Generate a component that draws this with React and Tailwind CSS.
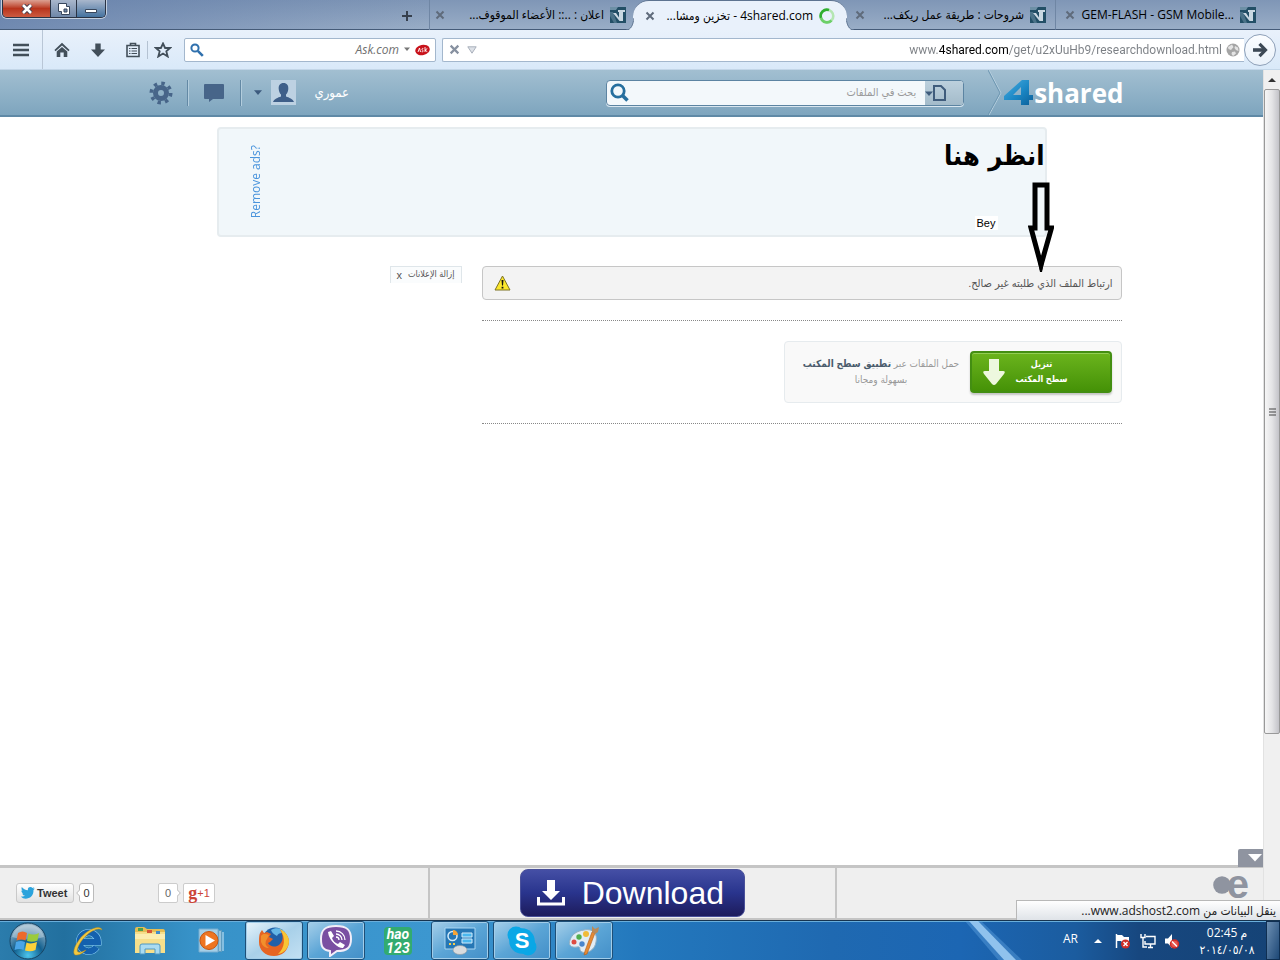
import React from "react";
import clsx from "clsx";

const tabs = [
  { id: "members", title: "اعلان : ..:: الأعضاء الموقوف...", dir: "rtl", width: "w-[203px]" },
  { id: "4shared", title: "4shared.com - تخزين ومشا...", dir: "rtl", width: "w-[214px]", active: true },
  { id: "guides", title: "شروحات : طريقة عمل ريكف...", dir: "rtl", width: "w-[208px]" },
  { id: "gem", title: "GEM-FLASH - GSM Mobile...", dir: "ltr", width: "w-[208px]" },
];

function CrossIcon({ className }) {
  return (
    <svg viewBox="0 0 10 10" className={className} aria-hidden="true">
      <path d="M1.5 1.5 8.5 8.5M8.5 1.5 1.5 8.5" stroke="currentColor" strokeWidth="2" fill="none" />
    </svg>
  );
}

function ForumIcon() {
  return (
    <svg viewBox="0 0 16 16" className="size-4 shrink-0" aria-hidden="true">
      <path d="M0 0H16V16H0Z" fill="#234f66" />
      <path d="M0 0H8L6 3H0Z" fill="#6d90a6" />
      <path d="M0 5H3L7 16H4L0 9Z" fill="#4b7288" />
      <path d="M3 6H6L9 10.500V5H8V3H15V5H13V14H9.500Z" fill="#c9d8e2" />
    </svg>
  );
}

function SpinnerIcon() {
  return (
    <svg viewBox="0 0 16 16" className="size-4 shrink-0" aria-hidden="true">
      <circle cx="8" cy="8" r="6.300" fill="none" stroke="#b4e6b2" strokeWidth="2.600" />
      <path d="M10 2A6.300 6.300 0 0 0 2 10" fill="none" stroke="#2fae2f" strokeWidth="2.600" />
      <path d="M2 10A6.300 6.300 0 0 0 12.500 12.500" fill="none" stroke="#6ccf68" strokeWidth="2.600" />
    </svg>
  );
}

function Tab({ tab }) {
  return (
    <div
      className={clsx(
        "relative flex h-[30px] min-w-0 items-center text-xs text-black",
        tab.width,
        tab.active
          ? "rounded-t-2xl border-t border-[#5d7390] bg-[#e9f1fb] pr-3 pl-3"
          : "border-b border-[#455b78] pr-[7px] pl-[5px]",
        tab.id === "guides" && "pl-[8px]! pr-[9px]!",
        tab.id === "gem" && "border-l border-l-[#6f86a4] pl-[9px]!"
      )}
    >
      {tab.active && (
        <>
          <svg viewBox="0 0 8 12" className="absolute bottom-0 -left-[7px] h-3 w-2" aria-hidden="true">
            <path d="M8 0C7 7 5 12 0 12H8Z" fill="#e9f1fb" />
            <path d="M8 0C7 7 5 12 0 12" fill="none" stroke="#5d7390" />
          </svg>
          <svg viewBox="0 0 8 12" className="absolute -right-[7px] bottom-0 z-10 h-3 w-2" aria-hidden="true">
            <path d="M0 0C1 7 3 12 8 12H0Z" fill="#e9f1fb" />
            <path d="M0 0C1 7 3 12 8 12" fill="none" stroke="#5d7390" />
          </svg>
        </>
      )}
      <button type="button" aria-label="Close tab" className="shrink-0 text-[#5f6b7b]">
        <CrossIcon className="size-[10px]" />
      </button>
      <span dir={tab.dir} className="mx-[6px] min-w-0 flex-1 text-right whitespace-nowrap">
        {tab.title}
      </span>
      {tab.active ? <SpinnerIcon /> : <ForumIcon />}
    </div>
  );
}

function TabStrip() {
  return (
    <div className="flex h-[30px] items-start overflow-hidden bg-linear-to-b from-[#7f96b6] to-[#9aaec7]">
      <div className="flex min-w-0 flex-1 items-start justify-between self-stretch border-b border-[#455b78] bg-linear-to-r from-[#5f7ba8]/70 to-transparent pl-[2px]">
        <div className="flex h-[18px] rounded-b-[5px] border border-t-0 border-[#2a3344] shadow-[0_0_0_1px_#c3cfdf]">
          <button type="button" aria-label="Close" className="grid w-[47px] place-items-center rounded-bl bg-linear-to-b from-[#dba092] via-[#b8341c] to-[#cc5a40]">
            <svg viewBox="0 0 12 10" className="h-[10px] w-3">
              <path d="M2 1 10 9M10 1 2 9" stroke="#453a48" strokeWidth="4.500" />
              <path d="M2 1 10 9M10 1 2 9" stroke="#fff" strokeWidth="2.600" />
            </svg>
          </button>
          <button type="button" aria-label="Restore" className="grid w-[27px] place-items-center border-x border-[#2a3344] bg-linear-to-b from-[#a9b7cc] to-[#6f87a8]">
            <svg viewBox="0 0 12 12" className="size-3">
              <path d="M.5.5H8.500V3.500H11.500V11.500H3.500V8.500H.5Z" fill="#fff" stroke="#38465c" />
              <path d="M6 6H9V9H6Z" fill="#7389a8" stroke="#38465c" />
            </svg>
          </button>
          <button type="button" aria-label="Minimize" className="grid w-[28px] place-items-center rounded-br bg-linear-to-b from-[#a9b7cc] to-[#44729f]">
            <svg viewBox="0 0 12 12" className="size-3">
              <path d="M.5 6.500H11.500V9.500H.5Z" fill="#fff" stroke="#38465c" />
            </svg>
          </button>
        </div>
        <button type="button" aria-label="New tab" className="mt-[10px] mr-4">
          <svg viewBox="0 0 12 12" className="size-3">
            <path d="M6 1V11M1 6H11" stroke="#36404e" strokeWidth="2" />
          </svg>
        </button>
      </div>
      <div className="flex shrink-0 border-l border-[#6f86a4]">
        {tabs.map((tab) => (
          <Tab key={tab.id} tab={tab} />
        ))}
      </div>
      <div className="w-[17px] self-stretch border-b border-[#455b78]" />
    </div>
  );
}

function Toolbar() {
  return (
    <div className="flex h-10 items-center border-b border-[#c3d6e8] bg-linear-to-b from-[#e9f1fb] to-[#d9e9f9] text-[#424f5a]">
      <div className="flex h-full w-[43px] items-center border-r border-[#b9c6d6] pl-3">
        <button type="button" aria-label="Menu">
          <svg viewBox="0 0 18 14" className="h-[14px] w-[18px]">
            <path d="M1 2H17M1 7H17M1 12H17" stroke="currentColor" strokeWidth="2.600" />
          </svg>
        </button>
      </div>
      <div className="flex items-center gap-5 pl-[11px]">
        <button type="button" aria-label="Home">
          <svg viewBox="0 0 16 16" className="size-4">
            <path d="M8 .8 15.600 8 14.400 9.200 8 3.400 1.600 9.200.4 8Z" fill="currentColor" />
            <path d="M8 5 13.300 9.500V15H9.700V10.500H6.300V15H2.700V9.500Z" fill="currentColor" />
          </svg>
        </button>
        <button type="button" aria-label="Downloads">
          <svg viewBox="0 0 16 16" className="size-4">
            <path d="M5.300 1.500H10.700V7.500H15L8 15 1 7.500H5.300Z" fill="currentColor" />
          </svg>
        </button>
      </div>
      <div className="flex items-center gap-[6px] pl-[19px]">
        <button type="button" aria-label="Bookmarks">
          <svg viewBox="0 0 16 16" className="size-4" fill="none" stroke="currentColor">
            <path d="M2 3.500H14V14.500H2Z" strokeWidth="1.600" />
            <path d="M5.500 3.500V1.500H10.500V3.500" strokeWidth="1.600" />
            <path d="M4 6.500H5.500M6.500 6.500H12M4 9H5.500M6.500 9H12M4 11.500H5.500M6.500 11.500H12" strokeWidth="1.200" />
          </svg>
        </button>
        <span className="h-[18px] w-px bg-[#b4c2d2]" />
        <button type="button" aria-label="Bookmark this page">
          <svg viewBox="0 0 18 16" className="h-4 w-[18px]" fill="none" stroke="currentColor">
            <path d="M9 1.500 11.100 6H16L12.300 9.200 13.700 14.500 9 11.600 4.300 14.500 5.700 9.200 2 6H6.900Z" strokeWidth="1.800" />
          </svg>
        </button>
      </div>
      <label className="mr-[6px] ml-3 flex h-6 w-[252px] shrink-0 items-center rounded-[2px] border border-[#a3b7cd] bg-white pr-[5px] pl-[5px]">
        <svg viewBox="0 0 14 14" className="size-[14px] shrink-0" fill="none" stroke="#2f70ad">
          <circle cx="5" cy="5" r="3.600" strokeWidth="2" />
          <path d="M7.800 7.800 12.800 12.800" strokeWidth="2.600" />
        </svg>
        <input
          aria-label="Search with Ask.com"
          placeholder="Ask.com"
          className="min-w-0 flex-1 text-right text-xs italic outline-none placeholder:text-[#6f6f6f]"
        />
        <svg viewBox="0 0 8 5" className="mx-[4px] h-[5px] w-2">
          <path d="M1 .5H7L4 4Z" fill="#777" />
        </svg>
        <svg viewBox="0 0 15 12" className="h-3 w-[15px]">
          <ellipse cx="7.500" cy="6" rx="7.300" ry="5.200" fill="#c8121b" transform="rotate(-12 7.500 6)" />
          <path d="M3 8 4.500 4 5.500 8M8.300 4.500C6.500 4 6.500 6 7.600 6.200S8.300 8.200 6.700 7.700M10 3V8M12.300 4.500 10 6.200 12.300 7.700" stroke="#fff" strokeWidth=".9" fill="none" />
        </svg>
      </label>
      <div className="flex h-full min-w-0 flex-1 items-center pr-1">
        <div className="flex h-6 min-w-0 flex-1 items-center rounded-l-[2px] border border-r-0 border-[#a3b7cd] bg-white pr-1 pl-[6px]">
          <button type="button" aria-label="Stop" className="text-[#8791a0]">
            <CrossIcon className="size-[11px]" />
          </button>
          <svg viewBox="0 0 10 8" className="ml-[7px] h-2 w-[10px]">
            <path d="M.8.8H9.200L5 7.200Z" fill="#dde1e7" stroke="#a1a9b5" strokeWidth=".9" />
          </svg>
          {/* the host name stands out darker than the rest of the address */}
          <input
            aria-label="Address"
            defaultValue="www.4shared.com/get/u2xUuHb9/researchdownload.html"
            className="min-w-0 flex-1 bg-[linear-gradient(to_left,#7b7f84_213px,#000_213px,#000_284px,#7b7f84_284px)] bg-clip-text text-right font-['Roboto',sans-serif] text-xs text-transparent outline-none"
          />
          <svg viewBox="0 0 14 14" className="ml-1 size-[14px]">
            <circle cx="7" cy="7" r="6.500" fill="#a5a5a5" />
            <path d="M2 4 6 1.500 7.500 4 5 7 2.500 6ZM9 3 12 4.500 12.500 8 10 7 8.500 5ZM6 9 9 8.500 10 10.500 7 13 5.500 11Z" fill="#e4e4e4" />
          </svg>
        </div>
        <button type="button" aria-label="Go" className="grid size-8 shrink-0 place-items-center rounded-full border border-[#8ea0b8] bg-linear-to-b from-[#fbfdff] to-[#e9f1fa]">
          <svg viewBox="0 0 16 16" className="size-4" fill="none" stroke="#3d4956">
            <path d="M1 8H12" strokeWidth="3.600" />
            <path d="M7.500 1.800 13.500 8 7.500 14.200" strokeWidth="3.200" />
          </svg>
        </button>
      </div>
    </div>
  );
}

function SiteHeader() {
  return (
    <header className="h-[47px] border-b-2 border-[#5f89a6] bg-linear-to-b from-[#a2bfd1] to-[#7ea5be]">
      <div className="mx-auto flex h-full max-w-[984px] items-center pl-[9px]">
        <button type="button" aria-label="Settings">
          <svg viewBox="0 0 24 24" className="size-6" fill="none" stroke="#476589">
            <circle cx="12" cy="12" r="5.500" strokeWidth="5" />
            <circle cx="12" cy="12" r="9.700" strokeWidth="3.600" strokeDasharray="3.400 4.218" />
          </svg>
        </button>
        <span className="ml-[14px] h-[26px] w-px bg-[#6389a5] shadow-[1px_0_0_#b3cddd]" />
        <button type="button" aria-label="Messages" className="ml-[15px]">
          <svg viewBox="0 0 22 19" className="h-[19px] w-[22px]">
            <path d="M2 1H20Q21 1 21 2V15Q21 16 20 16H10L6 19V16H2Q1 16 1 15V2Q1 1 2 1Z" fill="#476589" />
          </svg>
        </button>
        <span className="ml-[15px] h-[26px] w-px bg-[#6389a5] shadow-[1px_0_0_#b3cddd]" />
        <button type="button" className="ml-[13px] flex items-center text-[13px] text-white">
          <svg viewBox="0 0 8 5" className="h-[5px] w-2">
            <path d="M0 .3H8L4 5Z" fill="#3c5a7e" />
          </svg>
          <svg viewBox="0 0 25 25" className="ml-[9px] size-[25px]">
            <path d="M0 0H25V25H0Z" fill="#bdd1e2" />
            <path d="M12.500 3C16 3 17.600 5.500 17.300 9 17 12 16 13.500 15 14.500V16.500C18 17.500 22 19 23 22H2C3 19 7 17.500 10 16.500V14.500C9 13.500 8 12 7.700 9 7.400 5.500 9 3 12.500 3Z" fill="#3f5f89" />
          </svg>
          <span dir="rtl" className="ml-[19px]">عموري</span>
        </button>
        <div className="ml-auto flex h-[26px] w-[358px] overflow-hidden rounded border border-[#5c84a2] bg-[#f3f8fb] shadow-[0_1px_0_#d9e7f0]">
          <button type="button" aria-label="Search" className="pl-[3px]">
            <svg viewBox="0 0 19 19" className="size-[19px]" fill="none" stroke="#276f9e">
              <circle cx="8" cy="8" r="6.200" strokeWidth="2.800" />
              <path d="M12.500 12.500 17.500 17.500" strokeWidth="3.600" />
            </svg>
          </button>
          <input
            dir="rtl"
            aria-label="بحث في الملفات"
            placeholder="بحث في الملفات"
            className="min-w-0 flex-1 pr-[9px] text-[11px] outline-none placeholder:text-[#9a9a9a]"
          />
          <button type="button" aria-label="File type" className="w-[38px] bg-linear-to-b from-[#bcd0dd] to-[#a3bbca]">
            <svg viewBox="0 0 22 18" className="h-[18px] w-[22px]">
              <path d="M0 7.500H8L4 12Z" fill="#3f5c7c" />
              <path d="M9 2H16L20 6V16H9Z" fill="none" stroke="#3f5c7c" strokeWidth="2" />
            </svg>
          </button>
        </div>
        <svg viewBox="0 0 16 45" className="ml-6 h-full w-4" fill="none">
          <path d="M1 0 13 23 1 45" stroke="#b7cfde" />
          <path d="M0 0 12 23 0 45" stroke="#6d96b1" />
        </svg>
        <a href="#home" className="flex items-center font-['Open_Sans','Noto_Sans',sans-serif] text-[26px] leading-8 font-bold text-white">
          <svg viewBox="0 0 30 26" className="h-[26px] w-[30px]" aria-label="4">
            <defs>
              <linearGradient id="four" x1="0" y1="0" x2="1" y2="1">
                <stop offset="0" stopColor="#4aaee0" />
                <stop offset=".55" stopColor="#1a86c4" />
                <stop offset="1" stopColor="#0c5f98" />
              </linearGradient>
            </defs>
            <path d="M0 16 18 0H25V15H29V20H25V25H17V20H0ZM17 7 9 15H17Z" fill="url(#four)" fillRule="evenodd" />
          </svg>
          shared
        </a>
      </div>
    </header>
  );
}

function AdBanner() {
  return (
    <section className="mx-auto mt-[10px] flex h-[110px] max-w-[830px] justify-between rounded-[4px] border-2 border-[#e6ecef] bg-[#f1f7fa]">
      <a href="#remove-ads" className="mb-[17px] ml-[29px] rotate-180 self-end text-xs leading-4 text-[#4a94dc] [writing-mode:vertical-rl]">
        Remove ads?
      </a>
      <div className="relative flex flex-col items-end justify-between pb-[5px]">
        <p dir="rtl" className="pt-[3px] font-['DejaVu_Sans_Condensed','DejaVu_Sans',sans-serif] text-[27px] leading-[48px] font-bold text-black">
          انظر هنا
        </p>
        <span className="mr-[47px] bg-white px-[2px] font-['Liberation_Sans',sans-serif] text-[11px] leading-[14px] text-black">
          Bey
        </span>
        {/* pointer drawn over the banner and the notice */}
        <svg viewBox="0 0 26 90" className="absolute top-[53px] -right-[9px] z-10 h-[90px] w-[26px]">
          <path d="M7 3H19V46H23.500L13 83 3 46H7Z" fill="none" stroke="#000" strokeWidth="5" />
          <path d="M9 74H17L14 90H12Z" fill="#000" />
        </svg>
      </div>
    </section>
  );
}

function PageBody() {
  return (
    <main className="flex-1 bg-white">
      <AdBanner />
      <div className="mx-auto mt-[29px] flex max-w-[980px] items-start justify-end gap-5 font-['Liberation_Sans','DejaVu_Sans_Condensed','DejaVu_Sans',sans-serif]">
        <button type="button" dir="rtl" className="flex h-[17px] w-[72px] items-center justify-between border border-b-0 border-[#dfe6ea] bg-[#fafcfd] px-[6px] text-[9px] whitespace-nowrap text-[#555]">
          <span>إزالة الإعلانات</span>
          <span className="text-[11px]">x</span>
        </button>
        <div className="w-[640px]">
          <div dir="rtl" role="alert" className="flex h-[34px] items-center justify-between rounded-[4px] border border-[#c6c6c6] bg-[#f3f3f3] pr-2 pl-[11px] text-[11px] text-[#555]">
            <span>ارتباط الملف الذي طلبته غير صالح.</span>
            <svg viewBox="0 0 17 16" className="h-4 w-[17px]" aria-hidden="true">
              <path d="M8.500 1 16 15H1Z" fill="#fbe72b" stroke="#7d7223" strokeLinejoin="round" />
              <path d="M7.500 5H9.500L9 10.500H8ZM7.600 11.700H9.400V13.500H7.600Z" fill="#111" />
            </svg>
          </div>
          <div className="mt-5 border-t border-dotted border-[#888]" />
          <div className="mt-5 ml-auto flex h-[62px] w-[338px] items-center rounded-[4px] border border-[#e6ebee] bg-[#f9f9f9] pr-[9px]">
            <p dir="rtl" className="flex-1 pl-2 text-center text-[10px] leading-4 whitespace-nowrap text-[#999]">
              حمل الملفات عبر <b className="text-[#4b5c6d]">تطبيق سطح المكتب</b>
              <br />
              بسهولة ومجانا
            </p>
            <button type="button" className="flex h-[42px] w-[142px] shrink-0 items-center rounded-[4px] border-2 border-[#438e12] bg-linear-to-b from-[#6bb41c] to-[#459207] pl-[10px] text-[9px] leading-[15px] font-bold text-white shadow-[inset_0_1px_0_#93cd54,0_2px_2px_#c4c4c4]">
              <svg viewBox="0 0 24 28" className="h-7 w-6" aria-hidden="true">
                <path d="M7 1H17V13H21Q24 13 22 16L14 26Q12 28 10 26L2 16Q0 13 3 13H7Z" fill="#edf8de" />
              </svg>
              <span dir="rtl" className="ml-[10px] text-center whitespace-nowrap">
                تنزيل
                <br />
                سطح المكتب
              </span>
            </button>
          </div>
          <div className="mt-5 border-t border-dotted border-[#888]" />
        </div>
      </div>
    </main>
  );
}

function ShareBar() {
  return (
    <footer className="relative grid h-[55px] grid-cols-[430fr_407fr_426fr] border-t-[3px] border-b-2 border-[#c5c5c5] bg-[#efefef]">
      <div className="flex items-center border-r-2 border-[#c5c5c5] pl-4 font-['Liberation_Sans',sans-serif] text-[11px] text-[#333]">
        <button type="button" className="flex h-5 w-[58px] items-center gap-[2px] rounded-[3px] border border-[#c9c9c9] bg-linear-to-b from-white to-[#e2e2e2] pl-1 font-bold">
          <svg viewBox="0 0 14 12" className="h-3 w-[14px] shrink-0" aria-hidden="true">
            <path d="M0 9.500C2 9.700 3.200 9.200 4 8.500 2.500 8.400 1.600 7.600 1.200 6.400H2.400C1 5.800.3 4.700.4 3.400L1.600 3.800C.4 2.600.3 1.300.8 0 2.300 2 4.300 3.100 6.900 3.200 6.600 1.200 7.700 0 9.400 0 10.300 0 11 .3 11.500.9L13.300.2 12.300 1.900 14 1.500 12.500 3C12.700 8.500 9 11.700 4.600 11.700 2.800 11.700 1.200 11 0 9.500Z" fill="#2ca3dc" />
          </svg>
          Tweet
        </button>
        <svg viewBox="0 0 4 8" className="z-10 -mr-px ml-[2px] h-2 w-1">
          <path d="M4 .5.700 4 4 7.500" fill="#fff" stroke="#bbb" />
        </svg>
        <span className="grid h-5 w-[15px] place-items-center rounded-[3px] border border-[#bbb] bg-white">0</span>
        <span className="ml-16 grid h-5 w-5 place-items-center rounded-[2px] border border-[#ccc] bg-white text-[#666]">0</span>
        <svg viewBox="0 0 4 8" className="z-10 -ml-px h-2 w-1">
          <path d="M0 .5 3.300 4 0 7.500" fill="#fff" stroke="#bbb" />
        </svg>
        <button type="button" className="ml-[2px] flex h-5 w-8 items-center justify-center rounded-[2px] border border-[#ccc] bg-white text-[#cc4437]">
          <span className="font-['Liberation_Serif',serif] text-[18px] leading-4 font-bold">g</span>+1
        </button>
      </div>
      <div className="flex items-center justify-center border-r-2 border-[#c5c5c5]">
        <button type="button" className="flex h-12 w-[225px] items-center justify-between rounded-[8px] border border-[#4a519a] bg-linear-to-b from-[#454fa5] via-[#29348d] to-[#1d1c5c] pr-5 pl-4 font-['Liberation_Sans',sans-serif] text-[32px] leading-10 text-white">
          <svg viewBox="0 0 28 26" className="h-[26px] w-7" aria-hidden="true">
            <path d="M10 0H18V11H23L14 20 5 11H10Z" fill="#fff" />
            <path d="M1.500 17V24H26.500V17" fill="none" stroke="#fff" strokeWidth="3" />
          </svg>
          Download
        </button>
      </div>
      <div className="flex items-start justify-end pr-[14px]">
        <svg viewBox="0 0 18 26" className="-mr-1 h-[26px] w-[18px]" aria-hidden="true">
          <circle cx="9" cy="17" r="8.800" fill="#8f94a0" />
        </svg>
        <span className="font-['Liberation_Sans',sans-serif] text-[40px] leading-[32px] font-bold text-[#8f94a0]">e</span>
      </div>
      <button type="button" aria-label="Hide bar" className="absolute -top-[19px] right-0 grid h-[18px] w-[25px] place-items-center rounded-tl-[2px] bg-[#8f94a0] pl-2">
        <svg viewBox="0 0 14 8" className="h-2 w-[14px]">
          <path d="M0 0H14L7 7.500Z" fill="#fff" />
        </svg>
      </button>
    </footer>
  );
}

function ScrollBar() {
  return (
    <div className="flex w-[17px] shrink-0 flex-col border-l border-[#e2e2e2] bg-[#f0f0f0]" aria-hidden="true">
      <div className="grid h-[19px] shrink-0 place-items-center">
        <svg viewBox="0 0 8 4" className="h-1 w-2">
          <path d="M0 4 4 0 8 4Z" fill="#333" />
        </svg>
      </div>
      <div className="flex basis-[645px] items-center justify-center rounded-[2px] border border-[#999] bg-linear-to-r from-[#f6f6f6] via-[#e4e4e6] to-[#c3c3c8]">
        <svg viewBox="0 0 7 8" className="h-2 w-[7px]">
          <path d="M0 1H7M0 4H7M0 7H7" stroke="#444" />
        </svg>
      </div>
    </div>
  );
}

function WindowsOrb() {
  return (
    <svg viewBox="0 0 38 38" className="size-[38px]">
      <defs>
        <radialGradient id="orb" cx=".5" cy=".9" r=".8">
          <stop offset="0" stopColor="#4cc6ee" />
          <stop offset=".5" stopColor="#12608f" />
          <stop offset="1" stopColor="#8fb0c6" />
        </radialGradient>
      </defs>
      <circle cx="19" cy="19" r="18" fill="url(#orb)" stroke="#174464" />
      <path d="M3 15A16.500 16.500 0 0 1 35 15Q19 20 3 15Z" fill="#fff" opacity=".3" />
      <path d="M9 11C12 9 15 9 18 11L16.500 18.500C13.500 17 11 17 7.500 18.500Z" fill="#ec6a2b" />
      <path d="M19.500 11.500C22.500 13 26 13 30 11L28.500 18.500C25 20 21.500 20 18 19Z" fill="#9bcb3b" />
      <path d="M7 20C10.500 18.500 13 18.500 16 20L14.500 28C12 26.500 9 26.500 5.500 28Z" fill="#4aa5e8" />
      <path d="M17.500 20.500C21 22 24 21.500 28 20L26.500 28C23 29.500 19.500 29.500 16 28.500Z" fill="#fcd13a" />
    </svg>
  );
}

function ExplorerIcon() {
  return (
    <svg viewBox="0 0 32 32" className="size-8" fill="none">
      <path d="M9 17H26A9.300 9.300 0 1 0 24.500 22" stroke="#8fd3fa" strokeWidth="7" />
      <path d="M9 17H26A9.300 9.300 0 1 0 24.500 22" stroke="#1461ae" strokeWidth="6" />
      <path d="M30 5C28-1 14 5 7 15 1 23 0 31 5 30 8 30 12 27 14 25 6 29 3 28 7 20 12 10 25 1 30 5Z" fill="#f3c841" stroke="#b98c14" strokeWidth=".5" />
    </svg>
  );
}

function FolderIcon() {
  return (
    <svg viewBox="0 0 32 32" className="size-8">
      <path d="M1 4Q1 2 3 2H10L13 4H29Q31 4 31 7V27H1Z" fill="#e4bd55" />
      <path d="M1 7H31V28H1Z" fill="#f6df8b" />
      <path d="M1 9H31V14H1Z" fill="#fbedb0" />
      <path d="M4 3H9V6H4Z" fill="#4aa04d" />
      <path d="M13 5H18V8H13Z" fill="#d85536" />
      <path d="M22 6H26V9H22Z" fill="#438cc8" />
      <path d="M6 29V21Q6 19 8 19H24Q26 19 26 21V29H21V24H11V29Z" fill="#a9dbf1" stroke="#4f98c2" />
    </svg>
  );
}

function PlayerIcon() {
  return (
    <svg viewBox="0 0 28 26" className="h-[26px] w-7">
      <path d="M6 2H24V24H6Z" fill="#5e9cc0" />
      <path d="M22 3V23M25 4V23" stroke="#d5ecf8" />
      <path d="M1 1H20V24H1Z" fill="#a5cfe7" stroke="#77add0" />
      <circle cx="11" cy="12.500" r="9" fill="#ee7521" stroke="#c65510" />
      <path d="M7.500 7 17 12.500 7.500 18Z" fill="#fff" />
    </svg>
  );
}

function FirefoxIcon() {
  return (
    <svg viewBox="0 0 32 32" className="size-8">
      <circle cx="17" cy="15" r="12.500" fill="#2160a8" />
      <path d="M13 5C18 2 25 3 28 9 24 7 20 8 19 11 16 9 14 8 13 5Z" fill="#65b7e6" />
      <path d="M2 8 4 5 6 8 9 7 13 9 11 12 15 14 12 17 10 18C12 22 18 23 22 19 26 15 25 9 22 5 28 7 31 12 31 17 30 26 24 31 16 31 7 31 1 25 1 17 1 13 1 11 2 8Z" fill="#e66422" />
      <path d="M22 4C28 7 31 12 31 17 30 24 26 28 20 29 27 23 28 13 22 4Z" fill="#f9c535" />
      <path d="M3 11C5 8 8 9 11 10L9 14Q5 19 11 23 5 23 3 17Z" fill="#f28f2c" />
    </svg>
  );
}

function ViberIcon() {
  return (
    <svg viewBox="0 0 32 32" className="size-8">
      <path d="M16 1C27 1 31 5 31 14 31 23 27 26 17 26L10 31V26C3 25 1 22 1 14 1 5 5 1 16 1Z" fill="#7a4fa2" stroke="#f2edf8" strokeWidth="2" />
      <path d="M8 7 11 6 14 11 12 13C13 16 15 18 18 19L20 17 25 20 23 23C20 24 9 17 8 7Z" fill="#fff" />
      <path d="M16 6A9 9 0 0 1 25 15M16 9A6 6 0 0 1 22 15M16 12A3 3 0 0 1 19 15" fill="none" stroke="#fff" strokeWidth="1.300" />
    </svg>
  );
}

function ControlPanelIcon() {
  return (
    <svg viewBox="0 0 32 28" className="h-7 w-8">
      <path d="M1 1H31V22H1Z" fill="#2677b5" stroke="#aad7f3" />
      <circle cx="8.500" cy="9" r="4.500" fill="none" stroke="#d2ebfa" strokeWidth="1.500" />
      <path d="M9 8V3A5 5 0 0 1 14 8Z" fill="#f6a436" />
      <path d="M18 6H28V10H18ZM18 12H28V16H18Z" fill="#4ab7ee" stroke="#d2ebfa" />
      <path d="M5 17H7M9 17H11" stroke="#f7cd4c" strokeWidth="2" />
      <ellipse cx="16" cy="23" rx="7" ry="4.500" fill="#d9dcde" stroke="#8d979d" strokeWidth=".6" />
    </svg>
  );
}

function SkypeIcon() {
  return (
    <span className="relative grid size-[30px] place-items-center font-['Liberation_Sans',sans-serif] text-[22px] leading-none font-bold text-white">
      <svg viewBox="0 0 30 30" className="absolute inset-0 size-[30px]">
        <circle cx="9" cy="9" r="8.500" fill="#0aa7e6" />
        <circle cx="21" cy="21" r="8.500" fill="#0aa7e6" />
        <circle cx="15" cy="15" r="12.800" fill="#0aa7e6" />
      </svg>
      <span className="relative">S</span>
    </span>
  );
}

function PaintIcon() {
  return (
    <svg viewBox="0 0 32 32" className="size-8">
      <path d="M16 5C25 3 30 9 28 17 27 25 19 29 14 27 10 25 14 21 9 22 3 23 0 20 2 15 4 9 9 6 16 5Z" fill="#e1edf5" stroke="#92afc2" />
      <circle cx="6" cy="17" r="2.500" fill="#dd4b42" />
      <circle cx="11" cy="12" r="2.700" fill="#50ae4f" />
      <circle cx="18" cy="9" r="3" fill="#f0bb38" />
      <circle cx="14" cy="19" r="2.700" fill="#4886cd" />
      <path d="M27 8 19 29 16 30 17 26 24 7Z" fill="#e58a34" stroke="#ae5d18" strokeWidth=".6" />
      <path d="M24 1 27 4 31 2 30 7 27 9 24 7Z" fill="#b98a58" />
    </svg>
  );
}

const taskbarItems = [
  { name: "Internet Explorer", icon: <ExplorerIcon /> },
  { name: "Windows Explorer", icon: <FolderIcon /> },
  { name: "Media Player", icon: <PlayerIcon /> },
  { name: "Firefox", icon: <FirefoxIcon />, open: true, current: true },
  { name: "Viber", icon: <ViberIcon />, open: true },
  {
    name: "hao 123",
    icon: (
      <span className="flex h-7 w-7 flex-col items-center justify-center rounded-[4px] bg-[#32ab70] font-['Roboto',sans-serif] text-[14px] leading-[14px] font-bold text-white italic">
        <span>hao</span>
        <span>123</span>
      </span>
    ),
  },
  { name: "Control Panel", icon: <ControlPanelIcon />, open: true },
  { name: "Skype", icon: <SkypeIcon />, open: true },
  { name: "Paint", icon: <PaintIcon />, open: true },
];

function Taskbar() {
  return (
    <div className="flex h-10 items-stretch gap-1 overflow-hidden border-t border-[#17344f] bg-[linear-gradient(90deg,#2b7cac_0%,#22709f_5%,#3792c8_15%,#3c97d0_34%,#2378bd_50%,#1f69b1_65%,#1c66b3_75%,#1b5c9f_84%,#17477f_89%,#154376_100%)] shadow-[inset_0_1px_0_#69aedb]">
      <button type="button" aria-label="Start" className="grid w-[55px] shrink-0 place-items-center">
        <WindowsOrb />
      </button>
      {taskbarItems.map((item) => (
        <button
          key={item.name}
          type="button"
          aria-label={item.name}
          className={clsx(
            "grid w-[58px] shrink-0 place-items-center rounded-[3px] border",
            !item.open && "border-transparent",
            item.open && "border-[#1d4f78] shadow-[inset_0_0_0_1px_#a2cde9]",
            item.open && !item.current && "bg-linear-to-br from-[#a5cfe9] via-[#5ba5d6] to-[#438fc8]",
            item.current && "bg-linear-to-br from-[#e8f4fb] via-[#a8d0e9] to-[#c4e1f3]"
          )}
        >
          {item.icon}
        </button>
      ))}
      <div className="flex flex-1 justify-end pr-[34px]">
        <svg viewBox="0 0 60 40" className="h-10 w-[60px]" aria-hidden="true">
          <path d="M0 0H16L58 40H34Z" fill="#6fb2ec" opacity=".35" />
          <path d="M4 0H13L52 40H40Z" fill="#a6d3f8" opacity=".8" />
        </svg>
      </div>
      <div className="flex shrink-0 items-center text-[12px] text-white">
        <span className="pb-1 leading-5">AR</span>
        <button type="button" aria-label="Hidden icons" className="ml-4">
          <svg viewBox="0 0 8 4" className="h-1 w-2">
            <path d="M0 4 4 0 8 4Z" fill="#fff" />
          </svg>
        </button>
        <svg viewBox="0 0 16 16" className="ml-[13px] size-4" aria-label="Action center">
          <path d="M1.500 1V15" stroke="#fff" strokeWidth="1.500" />
          <path d="M2 2H7L9 4H14V10H8L6 8H2Z" fill="#fff" />
          <circle cx="10.500" cy="11" r="4.500" fill="#cf2d26" />
          <path d="M8.500 9 12.500 13M12.500 9 8.500 13" stroke="#fff" strokeWidth="1.400" />
        </svg>
        <svg viewBox="0 0 16 16" className="ml-[9px] size-4" fill="none" stroke="#fff" aria-label="Network">
          <path d="M6 3.500H15V11H5V8M8 14.500H13M10.500 11V14" strokeWidth="1.400" />
          <path d="M1 1V4.500H5V1M3 4.500V14H7" strokeWidth="1.400" />
        </svg>
        <svg viewBox="0 0 16 16" className="ml-2 size-4" aria-label="Muted">
          <path d="M1 5.500H4L8 1V15L4 10.500H1Z" fill="#fff" />
          <circle cx="10.500" cy="11" r="4" fill="#e5574f" stroke="#cf2d26" strokeWidth="1.500" />
          <path d="M8 8.500 13 13.500" stroke="#fff" strokeWidth="1.400" />
        </svg>
        <div className="ml-[14px] w-[66px] text-center leading-[17px]">
          <div>02:45 م</div>
          <div>٢٠١٤/٠٥/٠٨</div>
        </div>
      </div>
      <button type="button" aria-label="Show desktop" className="ml-[2px] w-[14px] border border-[#0f2f52] bg-linear-to-br from-[#6d90b3] to-[#1d4876]" />
    </div>
  );
}

export default function App() {
  return (
    <div className="flex min-h-screen flex-col bg-white font-['Open_Sans','DejaVu_Sans_Condensed','DejaVu_Sans',sans-serif]">
      <TabStrip />
      <Toolbar />
      <div className="relative flex flex-1">
        <div className="flex min-w-0 flex-1 flex-col">
          <SiteHeader />
          <PageBody />
          <ShareBar />
        </div>
        <ScrollBar />
        <div dir="rtl" className="absolute right-0 bottom-0 z-20 h-5 w-[264px] border-t border-l border-[#b8b8b8] bg-linear-to-b from-white to-[#dfe3e8] pr-1 text-[12px] leading-[19px] whitespace-nowrap text-[#222]">
          ينقل البيانات من www.adshost2.com...
        </div>
      </div>
      <Taskbar />
    </div>
  );
}
